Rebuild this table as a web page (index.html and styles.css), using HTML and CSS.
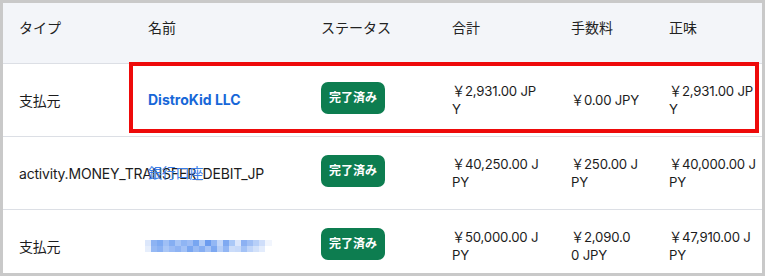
FILE: index.html
```html
<!DOCTYPE html>
<html lang="ja">
<head>
<meta charset="utf-8">
<title>Activity</title>
<link rel="stylesheet" href="styles.css">
</head>
<body>
<div class="frame">
  <table class="activity">
    <colgroup>
      <col class="c-type"><col class="c-name"><col class="c-status"><col class="c-total"><col class="c-fee"><col class="c-net">
    </colgroup>
    <thead>
      <tr>
        <th>タイプ</th><th>名前</th><th>ステータス</th><th>合計</th><th>手数料</th><th>正味</th>
      </tr>
    </thead>
    <tbody>
      <tr>
        <td class="type">支払元</td>
        <td><a class="name strong" href="#">DistroKid LLC</a></td>
        <td><span class="badge">完了済み</span></td>
        <td class="amt">￥2,931.00 JP<br>Y</td>
        <td class="amt">￥0.00 JPY</td>
        <td class="amt">￥2,931.00 JP<br>Y</td>
      </tr>
      <tr>
        <td class="type">activity.MONEY_TRANSFER_DEBIT_JP</td>
        <td><a class="name" href="#">銀行口座</a></td>
        <td><span class="badge">完了済み</span></td>
        <td class="amt">￥40,250.00 J<br>PY</td>
        <td class="amt">￥250.00 J<br>PY</td>
        <td class="amt">￥40,000.00 J<br>PY</td>
      </tr>
      <tr>
        <td class="type">支払元</td>
        <td><span class="mosaic" aria-label="(非表示)"></span></td>
        <td><span class="badge">完了済み</span></td>
        <td class="amt">￥50,000.00 J<br>PY</td>
        <td class="amt">￥2,090.0<br>0 JPY</td>
        <td class="amt">￥47,910.00 J<br>PY</td>
      </tr>
    </tbody>
  </table>
  <div class="highlight"></div>
</div>
</body>
</html>
```

FILE: styles.css
```css
* { box-sizing: border-box; }

html, body {
  margin: 0;
  padding: 0;
  background: #ffffff;
}

body {
  font-family: "Inter", "Noto Sans CJK JP", sans-serif;
  font-size: 14px;
  color: #1c1c1c;
}

.frame {
  position: relative;
  width: 765px;
  height: 276px;
  border: 3px solid #c9c9c9;
  overflow: hidden;
  background: #ffffff;
}

.activity {
  border-collapse: collapse;
  table-layout: fixed;
  width: 770px;
}

.c-type { width: 129px; }
.c-name { width: 173px; }
.c-status { width: 131px; }
.c-total { width: 119px; }
.c-fee { width: 98px; }
.c-net { width: 120px; }

.activity th {
  background: #f3f5f9;
  font-weight: 400;
  text-align: left;
  color: #222;
  line-height: 20px;
  height: 60px;
  padding: 15px 4px 24px 16px;
  border-bottom: 1px solid #dcdfe5;
  vertical-align: top;
}

.activity td {
  height: 73px;
  padding: 0 4px 0 16px;
  border-bottom: 1px solid #dcdfe5;
  vertical-align: middle;
  line-height: 18px;
  text-align: left;
  letter-spacing: -0.2px;
}

.activity td.type {
  white-space: nowrap;
  padding-top: 2px;
}

.activity td.amt {
  white-space: nowrap;
  font-size: 13.2px;
  letter-spacing: -0.2px;
}

.name {
  text-decoration: none;
  color: #3b7de6;
  position: relative;
}

.name.strong {
  color: #1767d8;
  font-weight: 700;
  letter-spacing: 0;
}

.badge {
  display: inline-block;
  background: #0d7d50;
  color: #ffffff;
  font-size: 12px;
  font-weight: 700;
  line-height: 16px;
  padding: 8px 8px;
  border-radius: 7px;
  margin-bottom: 4px;
  letter-spacing: 0;
}

.mosaic {
  display: inline-block;
  width: 127px;
  height: 12px;
  margin-left: -3px;
  margin-top: 4px;
  background-image:
    linear-gradient(90deg,
      #dce7fb 0 6px, #8db3f3 6px 12px, #7eaaf2 12px 18px, #9fbff5 18px 24px,
      #85aef2 24px 30px, #a6c4f6 30px 36px, #8fb5f4 36px 42px, #9cbcf5 42px 48px,
      #78a6f1 48px 54px, #b0cbf7 54px 60px, #6c9cef 60px 66px, #93b7f4 66px 72px,
      #c2d6f9 72px 78px, #7fa9f1 78px 84px, #aac8f7 84px 90px, #dbe6fb 90px 96px,
      #8cb1f3 96px 102px, #a0bff5 102px 108px, #b7cff8 108px 114px, #cfdefa 114px 120px,
      #f1f5fd 120px 127px),
    linear-gradient(90deg,
      #e6eefc 0 6px, #96b9f4 6px 12px, #8ab1f3 12px 18px, #a9c6f6 18px 24px,
      #9abbf5 24px 30px, #8eb3f3 30px 36px, #a2c1f6 36px 42px, #7aa7f1 42px 48px,
      #98baf4 48px 54px, #86aef2 54px 60px, #a5c3f6 60px 66px, #7da8f1 66px 72px,
      #b4cdf7 72px 78px, #92b6f4 78px 84px, #cbdcf9 84px 90px, #c6d9f9 90px 96px,
      #a3c2f6 96px 102px, #c0d5f9 102px 108px, #d2e1fa 108px 114px, #e3ecfc 114px 120px,
      #ffffff 120px 127px);
  background-size: 100% 6px, 100% 6px;
  background-position: 0 0, 0 6px;
  background-repeat: no-repeat;
}

.highlight {
  position: absolute;
  left: 126px;
  top: 59px;
  width: 630px;
  height: 71px;
  border: 4px solid #ee0a0a;
  pointer-events: none;
}
```
